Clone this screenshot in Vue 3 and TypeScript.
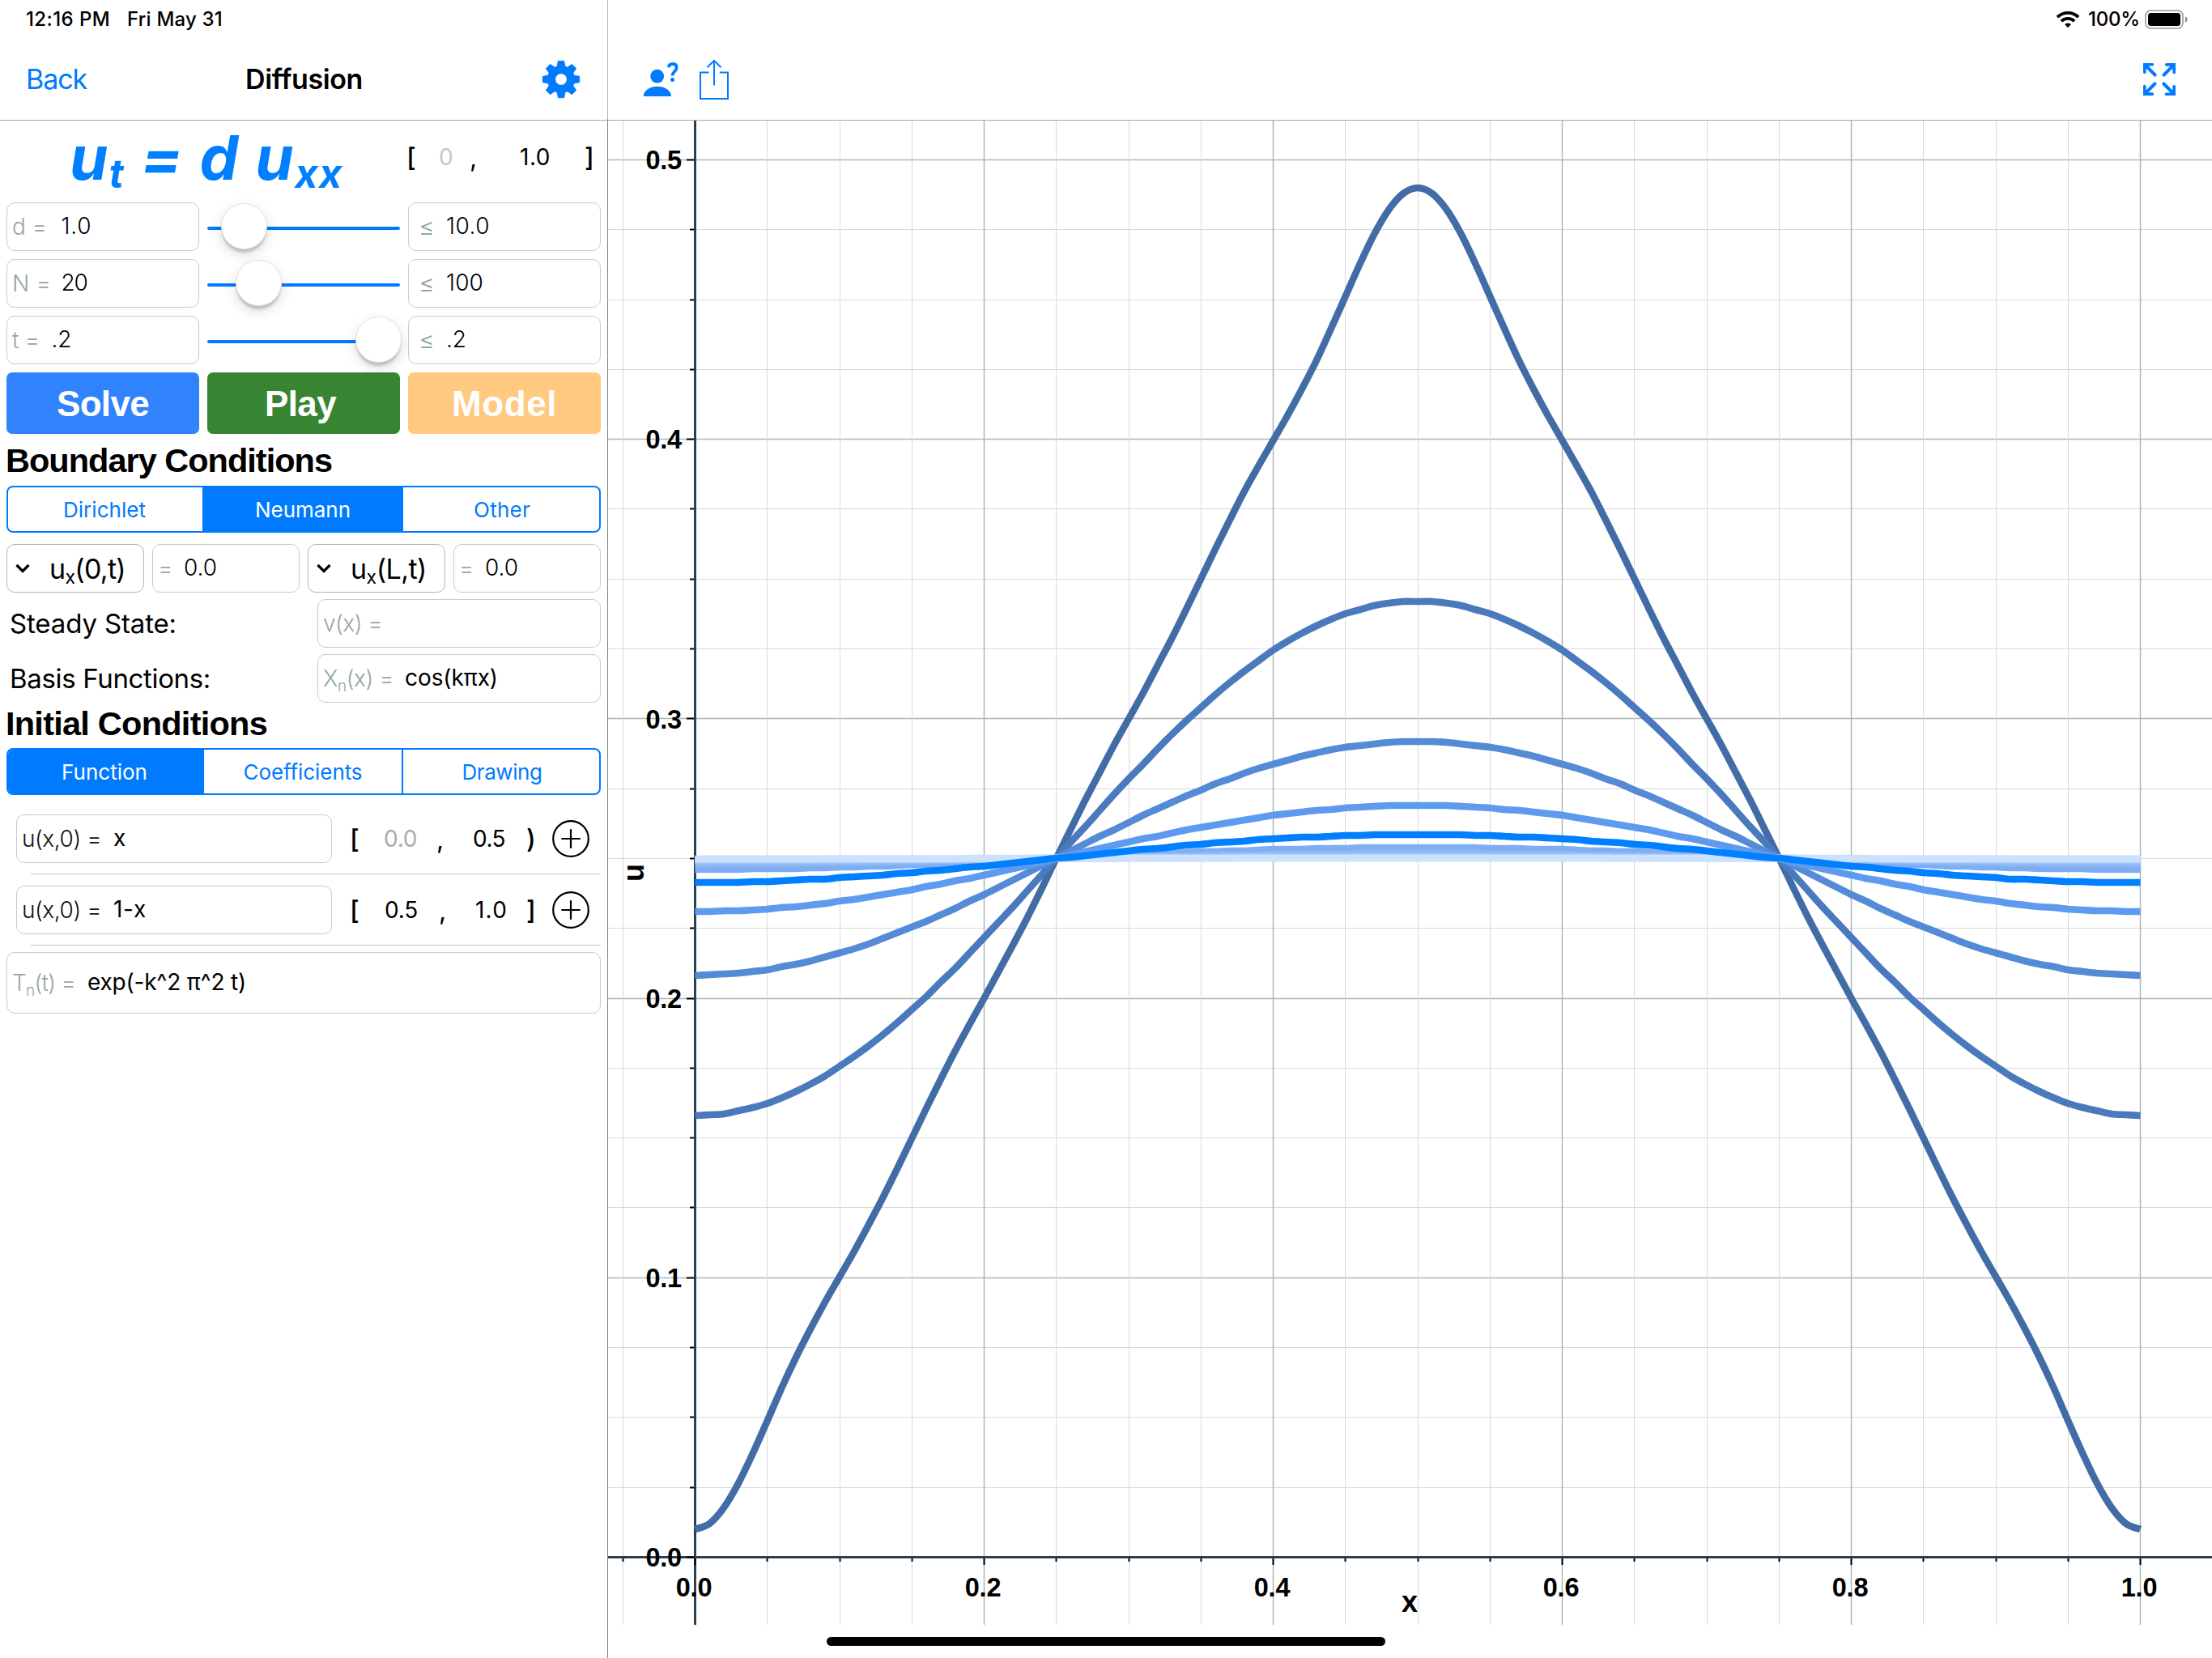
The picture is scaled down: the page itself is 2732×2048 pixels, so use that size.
<script setup lang="ts">
import type { Directive } from 'vue'

// Tracks a label so that its set width equals the given number of pixels.
const vFit: Directive<HTMLElement, number> = {
  mounted(el, { value }) {
    const n = (el.textContent ?? '').length
    if (!n) return
    const natural = el.getBoundingClientRect().width
    el.style.letterSpacing = `${(value - natural) / n}px`
  },
}

interface Param { name: string; nameW: number; value: string; valueX: number; valueW: number; knob: number; max: string; maxW: number }
const params: Param[] = [
  { name: 'd =', nameW: 43, value: '1.0', valueX: 67.5, valueW: 38, knob: 45, max: '10.0', maxW: 54 },
  { name: 'N =', nameW: 48, value: '20', valueX: 67.5, valueW: 32, knob: 63, max: '100', maxW: 46 },
  { name: 't =', nameW: 34, value: '.2', valueX: 55.5, valueW: 25, knob: 211, max: '.2', maxW: 25 },
]

interface Piece { fn: string; fnW: number; open: string; a: string; aX: number; dim: boolean; comma: number; b: string; bX: number; close: string }
const pieces: Piece[] = [
  { fn: 'x', fnW: 15, open: '[', a: '0.0', aX: 474, dim: true, comma: 539, b: '0.5', bX: 584, close: ')' },
  { fn: '1-x', fnW: 41, open: '[', a: '0.5', aX: 475, dim: false, comma: 542, b: '1.0', bX: 587, close: ']' },
]

// Plot geometry
const X0 = 858.5
const Y0 = 1923.4
const UX = 1785
const UY = 3452
const px = (x: number) => X0 + x * UX
const py = (u: number) => Y0 - u * UY

const vLines = Array.from({ length: 22 }, (_, i) => i - 1).map((i) => ({
  x: Math.floor(px(i * 0.05)) + 0.5,
  major: i % 4 === 0,
}))
const hLines = Array.from({ length: 21 }, (_, i) => ({
  y: Math.floor(py(i * 0.025)) + 0.5,
  major: i % 4 === 0,
}))
const yLabels = [0, 1, 2, 3, 4, 5].map((i) => ({ t: (i / 10).toFixed(1), y: py(i / 10) + 11.8 }))
const xLabels = [0, 1, 2, 3, 4, 5].map((i) => ({ t: (i / 5).toFixed(1), x: px(i / 5) - 1.5 }))

// Cosine series of the triangular initial condition on [0, 1]
function u(x: number, t: number): number {
  let s = 0.25
  for (let m = 1; m <= 9; m += 2) {
    const k = 2 * m
    s -= (2 / (Math.PI * Math.PI * m * m)) * Math.cos(k * Math.PI * x) * Math.exp(-k * k * Math.PI * Math.PI * t)
  }
  return s
}

function curve(t: number): string {
  const p = Array.from({ length: 101 }, (_, i) => [px(i / 100), Math.round(py(u(i / 100, t)))])
  const at = (i: number) => p[Math.max(0, Math.min(100, i))]
  let d = `M${p[0][0].toFixed(2)} ${p[0][1]}`
  for (let i = 0; i < 100; i++) {
    const [a, b, c, e] = [at(i - 1), at(i), at(i + 1), at(i + 2)]
    d += `C${(b[0] + (c[0] - a[0]) / 6).toFixed(2)} ${(b[1] + (c[1] - a[1]) / 6).toFixed(2)} ${(c[0] - (e[0] - b[0]) / 6).toFixed(2)} ${(c[1] - (e[1] - b[1]) / 6).toFixed(2)} ${c[0].toFixed(2)} ${c[1]}`
  }
  return d
}

const colors = ['#426ca6', '#4a7abd', '#548bd6', '#5e9af0', '', '#7dadf3', '#8fb8f5', '#9dc2f6', '#adccf8', '#bdd7fb', '#cce1fd']
const curves = colors
  .map((color, i) => ({ color, d: curve(i * 0.02) }))
  .filter((c) => c.color !== '')
const highlighted = curve(0.08)

const gear = (() => {
  const pts: string[] = []
  for (let i = 0; i < 8; i++) {
    const base = (i * Math.PI) / 4
    for (const [r, da] of [[16.8, -0.3], [23, -0.16], [23, 0.16], [16.8, 0.3]]) {
      const a = base + da
      pts.push(`${(24 + r * Math.cos(a)).toFixed(2)} ${(24 + r * Math.sin(a)).toFixed(2)}`)
    }
  }
  return `M${pts.join('L')}ZM31.3 24a7.3 7.3 0 1 0-14.6 0a7.3 7.3 0 1 0 14.6 0Z`
})()
</script>

<template>
  <div class="screen">
    <aside class="panel">
      <div class="status">
        <span v-fit="104" class="clock">12:16 PM</span>
        <span v-fit="118" class="date">Fri May 31</span>
      </div>
      <header class="nav">
        <a v-fit="75" class="back">Back</a>
        <h1 v-fit="145">Diffusion</h1>
        <svg class="gear" width="48" height="48" viewBox="0 0 48 48"><path :d="gear" fill="#007aff" stroke="#007aff" stroke-width="0.8" stroke-linejoin="round" fill-rule="evenodd" /></svg>
      </header>

      <div class="equation-row">
        <div v-fit="338" class="equation">u<sub>t</sub> = d u<sub>xx</sub></div>
        <div class="domain">
          <span class="bracket d-open">[</span>
          <span class="faint d-zero">0</span>
          <span class="d-comma">,</span>
          <span v-fit="38" class="d-one">1.0</span>
          <span class="bracket d-close">]</span>
        </div>
      </div>

      <div class="params">
        <template v-for="p in params" :key="p.name">
          <div class="field">
            <span v-fit="p.nameW" class="label">{{ p.name }}</span>
            <span v-fit="p.valueW" class="value" :style="{ marginLeft: `${p.valueX - 7 - p.nameW}px` }">{{ p.value }}</span>
          </div>
          <div class="slider"><i class="knob" :style="{ left: `${p.knob - 28.5}px` }"></i></div>
          <div class="field max">
            <span class="label le">≤</span>
            <span v-fit="p.maxW" class="value">{{ p.max }}</span>
          </div>
        </template>
        <button class="solve"><span v-fit="114">Solve</span></button>
        <button class="play"><span v-fit="88">Play</span></button>
        <button class="model"><span v-fit="130">Model</span></button>
      </div>

      <h2 class="h-boundary"><span v-fit="403">Boundary Conditions</span></h2>
      <div class="segments">
        <div class="seg"><span v-fit="102">Dirichlet</span></div>
        <div class="seg on"><span v-fit="118">Neumann</span></div>
        <div class="seg"><span v-fit="70">Other</span></div>
      </div>

      <div class="bc-row">
        <div class="combo">
          <svg width="20" height="14" viewBox="0 0 20 14"><path d="M2.5 3L10 10.5L17.5 3" fill="none" stroke="#000" stroke-width="3.2" /></svg>
          <span v-fit="94" class="combo-text">u<sub>x</sub>(0,t)</span>
        </div>
        <div class="field"><span class="label eq">=</span><span v-fit="41" class="value">0.0</span></div>
        <div class="combo">
          <svg width="20" height="14" viewBox="0 0 20 14"><path d="M2.5 3L10 10.5L17.5 3" fill="none" stroke="#000" stroke-width="3.2" /></svg>
          <span v-fit="94" class="combo-text">u<sub>x</sub>(L,t)</span>
        </div>
        <div class="field"><span class="label eq">=</span><span v-fit="41" class="value">0.0</span></div>
      </div>

      <div class="pair">
        <span v-fit="206" class="caption">Steady State:</span>
        <div class="field"><span v-fit="73" class="label">v(x) =</span></div>
      </div>
      <div class="pair last">
        <span v-fit="248" class="caption">Basis Functions:</span>
        <div class="field">
          <span v-fit="87" class="label">X<sub>n</sub>(x) =</span>
          <span v-fit="115" class="value cos">cos(kπx)</span>
        </div>
      </div>

      <h2 class="h-initial"><span v-fit="323">Initial Conditions</span></h2>
      <div class="segments">
        <div class="seg on"><span v-fit="106">Function</span></div>
        <div class="seg"><span v-fit="147">Coefficients</span></div>
        <div class="seg"><span v-fit="99">Drawing</span></div>
      </div>

      <div class="pieces">
        <div v-for="(p, i) in pieces" :key="i" class="piece">
          <div class="piece-body">
            <div class="field fn">
              <span v-fit="98" class="label dark">u(x,0) =</span>
              <span v-fit="p.fnW" class="value">{{ p.fn }}</span>
            </div>
            <div class="interval">
              <span class="bracket i-open">{{ p.open }}</span>
              <span v-fit="41" class="num" :class="{ dim: p.dim }" :style="{ marginLeft: `${p.aX - 446}px` }">{{ p.a }}</span>
              <span class="comma" :style="{ marginLeft: `${p.comma - p.aX - 41}px` }">,</span>
              <span v-fit="40" class="num" :style="{ marginLeft: `${p.bX - p.comma - 10}px` }">{{ p.b }}</span>
            </div>
            <span class="bracket i-close">{{ p.close }}</span>
            <svg class="plus" width="48" height="48" viewBox="0 0 48 48"><g fill="none" stroke="#000" stroke-width="2.2"><circle cx="24" cy="24" r="21.8" /><path d="M24 12.3v23.4M12.3 24h23.4" /></g></svg>
          </div>
          <div class="rule"></div>
        </div>
      </div>

      <div class="field time">
        <span v-fit="78" class="label">T<sub>n</sub>(t) =</span>
        <span v-fit="196" class="value">exp(-k^2 π^2 t)</span>
      </div>
    </aside>

    <main class="stage">
      <div class="status right">
        <svg width="30" height="22" viewBox="0 0 30 22"><g fill="none" stroke="#000" stroke-width="3.8"><path d="M2 8.2a18.4 18.4 0 0 1 26 0" /><path d="M6.9 13.2a11.5 11.5 0 0 1 16.2 0" /></g><path d="M15 21.3l-4-4.2a5.8 5.8 0 0 1 8 0z" fill="#000" /></svg>
        <span v-fit="64" class="percent">100%</span>
        <svg class="battery" width="56" height="24" viewBox="0 0 56 24"><rect x="1" y="1" width="46" height="22" rx="6.5" fill="none" stroke="#999" stroke-width="1.6" /><rect x="4" y="4" width="40" height="16" rx="3.5" /><path d="M50 8.2c3.4 1.3 3.4 6.3 0 7.6z" fill="#888" /></svg>
      </div>
      <header class="nav right">
        <svg class="person" width="46" height="46" viewBox="0 0 46 46" fill="#007aff"><circle cx="17.7" cy="19.2" r="8.4" /><path d="M1 44V41C4.5 34.5 10.5 31.8 17.8 31.8S31.5 34.5 34.8 41V44Z" /><path d="M32 8.2C32 5 34 4 37 4C40.200 4 41.600 5.800 41.600 8.500C41.600 13.500 36.400 13.200 36.400 18.600" fill="none" stroke="#007aff" stroke-width="3.8" /><circle cx="36.5" cy="23.4" r="2.5" /></svg>
        <svg class="share" width="38" height="52" viewBox="0 0 38 52"><path d="M12.5 17.500H2V50H36V17.500H25.800M19 33.500V3M10.500 11.300L19 2.800L27.500 11.300" fill="none" stroke="#007aff" stroke-width="2" /></svg>
        <svg class="expand" width="40" height="40" viewBox="0 0 40 40"><g v-for="a in [0, 90, 180, 270]" :key="a" fill="#007aff" :transform="`rotate(${a} 20 20)`"><path d="M0 0H11.5A1.7 1.7 0 0 1 11.5 3.6H6.5L16 13A1.9 1.9 0 0 1 13.2 16L3.7 6.6V11.2A1.7 1.7 0 0 1 0 11.2Z" /></g></svg>
      </header>

      <svg class="plot" width="1981" height="1899" viewBox="751 149 1981 1899">
        <g class="grid">
          <line v-for="l in hLines" :key="`h${l.y}`" x1="751" x2="2732" :y1="l.y" :y2="l.y" :class="{ major: l.major }" />
          <line v-for="l in vLines" :key="`v${l.x}`" y1="149" y2="2007" :x1="l.x" :x2="l.x" :class="{ major: l.major }" />
        </g>
        <path d="M751 1923.5H2732M858.5 149V2007" stroke="#2c3e50" stroke-width="3" />
        <g class="ticks">
          <line v-for="l in hLines" :key="`th${l.y}`" :x1="l.major ? 848 : 852" x2="857" :y1="l.y" :y2="l.y" />
          <line v-for="l in vLines" :key="`tv${l.x}`" y1="1925" :y2="l.major ? 1933 : 1929" :x1="l.x" :x2="l.x" />
        </g>
        <g class="axis-text">
          <text v-for="l in yLabels" :key="l.t" x="842" :y="l.y" text-anchor="end">{{ l.t }}</text>
          <text v-for="l in xLabels" :key="l.t" :x="l.x" y="1972" text-anchor="middle">{{ l.t }}</text>
          <text class="axis-name" x="1741" y="1990.5" text-anchor="middle">x</text>
          <text class="axis-name" transform="translate(795 1078) rotate(-90)" text-anchor="middle">u</text>
        </g>
        <g fill="none" stroke-width="8.6">
          <path v-for="c in curves" :key="c.color" :d="c.d" :stroke="c.color" />
          <path :d="highlighted" stroke="#0080ff" />
        </g>
      </svg>
      <div class="home"></div>
    </main>
  </div>
</template>

<style>
body { background: #fff; }
</style>

<style scoped>
* { box-sizing: border-box; }
.screen { display: flex; position: relative; width: 2732px; height: 2048px; overflow: hidden; background: #fff; color: #000; font-family: Inter, "Liberation Sans", sans-serif; font-size: 28px; }
span, h1, a, .equation { white-space: pre; display: inline-block; }
.panel { width: 750px; height: 2048px; display: flex; flex-direction: column; }
.stage { flex: 1; display: flex; flex-direction: column; border-left: 1px solid #b3b3b5; border-image: linear-gradient(#b8b8ba 148px, #858588 148px) 1; }

.status { height: 47px; display: flex; align-items: center; font-size: 24px; font-weight: 500; }
.clock { margin-left: 32px; }
.date { margin-left: 21px; }
.nav { height: 102px; display: flex; align-items: center; border-bottom: 1px solid #aaaaac; font-size: 34px; }
.back { margin-left: 32px; color: #007aff; }
h1 { margin: 0 0 0 196px; font-size: 34px; font-weight: 600; }
.gear { margin-left: 221px; }

.equation-row { height: 90px; display: flex; align-items: center; }
.equation { margin-left: 86px; font-size: 76px; line-height: 90px; font-weight: 700; font-style: italic; color: #0080ff; }
.equation sub { font-size: 49px; line-height: 0; vertical-align: -10px; }
.domain { display: flex; align-items: center; height: 90px; }
.bracket { font-size: 32px; font-weight: 500; width: 12px; }
.d-open { margin-left: 78px; }
.faint { color: #c7c7cc; }
.d-zero { margin-left: 28px; width: 20px; }
.d-comma { margin-left: 18px; width: 9px; font-size: 32px; }
.d-one { margin-left: 53px; }
.d-close { margin-left: 42px; }

.params { margin: 11px 8px 0; display: grid; grid-template-columns: 238px 238px 238px; gap: 10px; grid-template-rows: 60px 60px 60px 76px; }
.field { height: 60px; border: 1.5px solid #cbcbcb; border-radius: 10px; display: flex; align-items: center; padding-left: 6px; }
.label { font-weight: 300; color: #95a5a6; }
.label.dark { color: #111; }
.value { font-weight: 300; padding-bottom: 3px; }
.label sub { font-size: 19px; line-height: 0; vertical-align: -6px; }
.le { width: 20px; margin-left: 6px; font-size: 30px; }
.max .value { margin-left: 14px; }
.slider { position: relative; display: flex; align-items: center; padding-top: 4px; }
.slider::before { content: ""; width: 238px; height: 4px; border-radius: 2px; background: #007aff; }
.knob { position: absolute; top: 0.5px; width: 57px; height: 57px; border-radius: 50%; background: #fff; border: 1px solid #e4e4e4; box-shadow: 0 6px 16px rgba(0, 0, 0, 0.14), 0 5px 3px -1px rgba(0, 0, 0, 0.17); }
button { height: 76px; border: 0; border-radius: 7px; padding: 2px 0 0; color: #fff; font: bold 44px "Liberation Sans", Arial, sans-serif; }
.solve { background: #3083fb; }
.play { background: #378532; padding-right: 8px; }
.model { background: #ffc97f; }

h2 { margin: 0; font: bold 41.5px "Liberation Sans", Arial, sans-serif; padding-left: 7px; display: flex; align-items: center; }
.h-boundary { height: 64px; padding-top: 2px; }
.h-initial { height: 56px; padding-bottom: 4px; }
.segments { margin: 0 8px; height: 58px; display: flex; border: 2px solid #007aff; border-radius: 8px; color: #007aff; font-size: 26px; overflow: hidden; }
.seg { flex: 0 0 240px; display: flex; align-items: center; justify-content: center; padding-right: 2px; }
.seg + .seg { flex-basis: 246px; border-left: 2px solid #007aff; padding: 0; }
.seg + .seg + .seg { flex: 1; padding-left: 2px; }
.seg.on { background: #007aff; color: #fff; }

.bc-row { margin: 14px 8px 8px; display: grid; grid-template-columns: 170px 182px 170px 182px; column-gap: 10px; height: 60px; }
.combo { border: 1px solid #b5b5b5; border-radius: 10px; display: flex; align-items: center; font-size: 34px; padding-left: 9px; }
.combo-text { margin-left: 23px; }
.combo-text sub { font-size: 23px; line-height: 0; vertical-align: -6px; }
.eq { width: 18px; }
.bc-row .value { margin-left: 14px; }
.pair { margin: 0 8px 8px 12px; height: 60px; display: flex; align-items: center; justify-content: space-between; }
.pair.last { margin-bottom: 0; }
.pair .field { width: 350px; }
.caption { font-size: 33px; }
.cos { margin-left: 14px; font-weight: 400; }

.pieces { margin-top: 24px; }
.piece-body { height: 60px; display: flex; align-items: center; padding-left: 20px; }
.fn { width: 390px; }
.fn .label { font-weight: 300; }
.fn .value, .time .value { font-weight: 400; }
.fn .value { margin-left: 15px; }
.interval { display: flex; align-items: center; width: 240px; }
.i-open { margin-left: 22px; width: 14px; }
.dim { color: #ababab; }
.comma { width: 10px; font-size: 32px; }
.i-close { width: 31px; }
.rule { margin: 13px 8px 14px 38px; height: 1px; background: #c4c4c6; }
.piece:last-child .rule { margin-bottom: 8px; }
.time { margin: 0 8px; height: 76px; }
.time .value { margin-left: 15px; padding-bottom: 2px; }

.status.right { justify-content: flex-end; padding-right: 27px; }
.percent { margin-left: 10px; }
.battery { margin-left: 6px; }
.person { margin-left: 43px; }
.share { margin-left: 23px; }
.expand { margin-left: auto; margin-right: 45px; }

.plot { display: block; }
.grid line { stroke: #d9dada; stroke-width: 1; }
.grid .major { stroke: #adb7b7; stroke-width: 1.5; }
.ticks line { stroke: #000; stroke-width: 2; }
.axis-text { font: bold 32.5px "Liberation Sans", Arial, sans-serif; letter-spacing: -0.2px; }
.axis-name { font-size: 36px; }
.home { position: absolute; left: 1021px; top: 2022px; width: 690px; height: 11px; border-radius: 6px; background: #000; }
</style>
